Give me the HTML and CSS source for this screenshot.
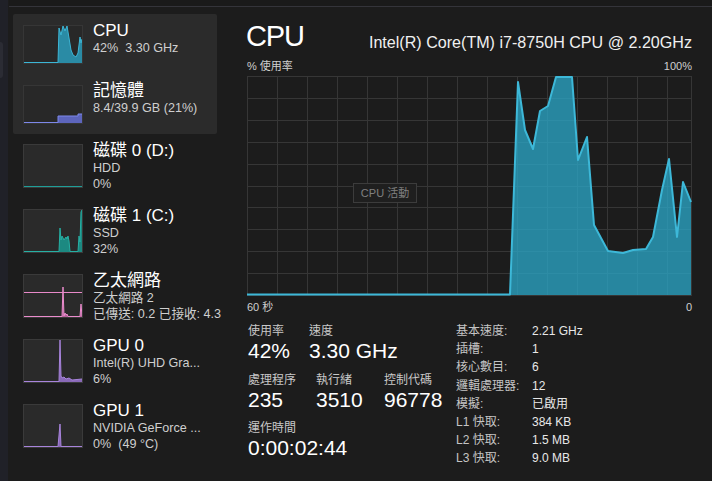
FILE: index.html
```html
<!DOCTYPE html>
<html lang="zh-Hant">
<head>
<meta charset="utf-8">
<title>工作管理員 - CPU</title>
<link rel="stylesheet" href="styles.css">
</head>
<body>
<div class="app">
  <div class="rail"><div class="rail-thumb"></div></div>
  <div class="shell">
    <div class="topbar"></div>
    <div class="cols">
      <nav class="sidebar">
        <div class="selected">
          <div class="item sel">
            <div class="thumb">
              <svg viewBox="0 0 58 37" width="58" height="37">
                <polygon points="0,37 34,37 35,2 37,9 39,0 41,5 43,0 45,12 47,24 49,29 52,31 54,27 56,11 57,17 58,13 58,37" fill="#2aa4c4" fill-opacity="0.8"/>
                <polyline points="0,36.5 34,36.5 35,2 37,9 39,0 41,5 43,0 45,12 47,24 49,29 52,31 54,27 56,11 57,17 58,13" fill="none" stroke="#3cb6d6" stroke-width="1"/>
              </svg>
            </div>
            <div class="meta">
              <div class="name">CPU</div>
              <div class="sub">42%&nbsp; 3.30 GHz</div>
            </div>
          </div>
          <div class="item sel">
            <div class="thumb">
              <svg viewBox="0 0 58 37" width="58" height="37">
                <polygon points="34,37 34,30 54,30 54,28 58,28 58,37" fill="#6670d6" fill-opacity="0.85"/>
                <polyline points="0,36.5 34,36.5 34,30 54,30 54,28 58,28" fill="none" stroke="#7d88ea" stroke-width="1"/>
              </svg>
            </div>
            <div class="meta">
              <div class="name">記憶體</div>
              <div class="sub">8.4/39.9 GB (21%)</div>
            </div>
          </div>
        </div>
        <div class="item">
          <div class="thumb">
            <svg viewBox="0 0 58 42" width="58" height="42">
              <line x1="0" y1="41.5" x2="58" y2="41.5" stroke="#1f9e98" stroke-width="1"/>
            </svg>
          </div>
          <div class="meta">
            <div class="name">磁碟 0 (D:)</div>
            <div class="sub">HDD</div>
            <div class="sub">0%</div>
          </div>
        </div>
        <div class="item">
          <div class="thumb">
            <svg viewBox="0 0 58 42" width="58" height="42">
              <polygon points="0,42 35,42 36,18 37,30 38,26 40,30 42,27 43,29 44,26 45,31 46,42 54,42 55,26 56,32 57,2 58,0 58,42" fill="#1a9a90" fill-opacity="0.85"/>
              <polyline points="0,41.5 35,41.5 36,18 37,30 38,26 40,30 42,27 43,29 44,26 45,31 46,41.5 54,41.5 55,26 56,32 57,2 58,0" fill="none" stroke="#26b0a4" stroke-width="1"/>
            </svg>
          </div>
          <div class="meta">
            <div class="name">磁碟 1 (C:)</div>
            <div class="sub">SSD</div>
            <div class="sub">32%</div>
          </div>
        </div>
        <div class="item">
          <div class="thumb">
            <svg viewBox="0 0 58 42" width="58" height="42">
              <line x1="0" y1="17.5" x2="58" y2="17.5" stroke="#e889c9" stroke-width="1"/>
              <polygon points="0,42 38,42 39,12 40,41 41,38 42,40 43,39 44,42 56,42 57,29 58,42" fill="#d76fb6" fill-opacity="0.8"/>
              <polyline points="0,41.5 38,41.5 39,12 40,41 41,38 42,40 43,39 44,41.5 56,41.5 57,29 58,41.5" fill="none" stroke="#ea8ccc" stroke-width="1"/>
            </svg>
          </div>
          <div class="meta">
            <div class="name">乙太網路</div>
            <div class="sub">乙太網路 2</div>
            <div class="sub">已傳送: 0.2 已接收: 4.3</div>
          </div>
        </div>
        <div class="item">
          <div class="thumb">
            <svg viewBox="0 0 58 42" width="58" height="42">
              <polygon points="0,42 35,42 36,0 37,36 38,38 40,37 42,39 45,38 48,40 58,39 58,42" fill="#9a74d0" fill-opacity="0.85"/>
              <polyline points="0,41.5 35,41.5 36,0 37,36 38,38 40,37 42,39 45,38 48,40 58,39" fill="none" stroke="#a884dc" stroke-width="1"/>
            </svg>
          </div>
          <div class="meta">
            <div class="name">GPU 0</div>
            <div class="sub">Intel(R) UHD Gra...</div>
            <div class="sub">6%</div>
          </div>
        </div>
        <div class="item">
          <div class="thumb">
            <svg viewBox="0 0 58 42" width="58" height="42">
              <polygon points="0,42 34,42 36,19 37,42" fill="#9a74d0" fill-opacity="0.85"/>
              <polyline points="0,41.5 34,41.5 36,19 37,41.5 58,41.5" fill="none" stroke="#a884dc" stroke-width="1"/>
            </svg>
          </div>
          <div class="meta">
            <div class="name">GPU 1</div>
            <div class="sub">NVIDIA GeForce ...</div>
            <div class="sub">0%&nbsp; (49 °C)</div>
          </div>
        </div>
      </nav>

      <main class="detail">
        <header class="head">
          <h1 class="title">CPU</h1>
          <div class="model">Intel(R) Core(TM) i7-8750H CPU @ 2.20GHz</div>
        </header>
        <div class="axis top-axis"><span>% 使用率</span><span>100%</span></div>
        <div class="graph">
          <svg viewBox="0 0 445 220" width="445" height="220">
            <g stroke="#363636" stroke-width="1">
              <line x1="0.5" y1="0" x2="0.5" y2="220"/>
              <line x1="30.5" y1="0" x2="30.5" y2="220"/>
              <line x1="60.5" y1="0" x2="60.5" y2="220"/>
              <line x1="90.5" y1="0" x2="90.5" y2="220"/>
              <line x1="120.5" y1="0" x2="120.5" y2="220"/>
              <line x1="150.5" y1="0" x2="150.5" y2="220"/>
              <line x1="180.5" y1="0" x2="180.5" y2="220"/>
              <line x1="210.5" y1="0" x2="210.5" y2="220"/>
              <line x1="240.5" y1="0" x2="240.5" y2="220"/>
              <line x1="270.5" y1="0" x2="270.5" y2="220"/>
              <line x1="300.5" y1="0" x2="300.5" y2="220"/>
              <line x1="330.5" y1="0" x2="330.5" y2="220"/>
              <line x1="360.5" y1="0" x2="360.5" y2="220"/>
              <line x1="390.5" y1="0" x2="390.5" y2="220"/>
              <line x1="420.5" y1="0" x2="420.5" y2="220"/>
              <line x1="444.5" y1="0" x2="444.5" y2="220"/>
              <line x1="0" y1="0.5" x2="445" y2="0.5"/>
              <line x1="0" y1="22.5" x2="445" y2="22.5"/>
              <line x1="0" y1="44.5" x2="445" y2="44.5"/>
              <line x1="0" y1="66.5" x2="445" y2="66.5"/>
              <line x1="0" y1="88.5" x2="445" y2="88.5"/>
              <line x1="0" y1="110.5" x2="445" y2="110.5"/>
              <line x1="0" y1="131.5" x2="445" y2="131.5"/>
              <line x1="0" y1="153.5" x2="445" y2="153.5"/>
              <line x1="0" y1="175.5" x2="445" y2="175.5"/>
              <line x1="0" y1="197.5" x2="445" y2="197.5"/>
              <line x1="0" y1="219.5" x2="445" y2="219.5"/>
            </g>
            <polygon points="0,219 263,219 271,6 278,54 286,73 293,35 301,30 309,1 325,1 331,84 340,61 347,149 361,175 376,177 386,174 399,173 406,161 415,114 422,83 430,161 436,106 444,126 444,219" fill="#2aa4c4" fill-opacity="0.78"/>
            <polyline points="0,218.5 263,218.5 271,6 278,54 286,73 293,35 301,30 309,1 325,1 331,84 340,61 347,149 361,175 376,177 386,174 399,173 406,161 415,114 422,83 430,161 436,106 444,126" fill="none" stroke="#3db8d8" stroke-width="2" stroke-linejoin="round"/>
          </svg>
          <div class="tip">CPU 活動</div>
        </div>
        <div class="axis bottom-axis"><span>60 秒</span><span>0</span></div>

        <section class="stats">
          <div class="stats-left">
            <div class="srow">
              <div class="stat w62"><div class="lbl">使用率</div><div class="val">42%</div></div>
              <div class="stat"><div class="lbl">速度</div><div class="val">3.30 GHz</div></div>
            </div>
            <div class="srow">
              <div class="stat w68"><div class="lbl">處理程序</div><div class="val">235</div></div>
              <div class="stat w68"><div class="lbl">執行緒</div><div class="val">3510</div></div>
              <div class="stat"><div class="lbl">控制代碼</div><div class="val">96778</div></div>
            </div>
            <div class="srow">
              <div class="stat"><div class="lbl">運作時間</div><div class="val">0:00:02:44</div></div>
            </div>
          </div>
          <dl class="stats-right">
            <div class="kv"><dt>基本速度:</dt><dd>2.21 GHz</dd></div>
            <div class="kv"><dt>插槽:</dt><dd>1</dd></div>
            <div class="kv"><dt>核心數目:</dt><dd>6</dd></div>
            <div class="kv"><dt>邏輯處理器:</dt><dd>12</dd></div>
            <div class="kv"><dt>模擬:</dt><dd>已啟用</dd></div>
            <div class="kv"><dt>L1 快取:</dt><dd>384 KB</dd></div>
            <div class="kv"><dt>L2 快取:</dt><dd>1.5 MB</dd></div>
            <div class="kv"><dt>L3 快取:</dt><dd>9.0 MB</dd></div>
          </dl>
        </section>
      </main>
    </div>
  </div>
</div>
</body>
</html>
```

FILE: styles.css
```css
* { box-sizing: border-box; }
html, body {
  margin: 0;
  padding: 0;
  background: #1c1c1c;
  width: 712px;
  height: 481px;
  overflow: hidden;
  font-family: "Liberation Sans", "Noto Sans CJK TC", sans-serif;
  color: #ffffff;
}
.app {
  display: flex;
  width: 712px;
  height: 481px;
}
.rail {
  width: 9px;
  flex: none;
  background: #202128;
  border-right: 1px solid #1c1c1c;
  padding-top: 42px;
}
.rail-thumb {
  width: 3px;
  height: 36px;
  background: #2b2c34;
  border-radius: 0 3px 3px 0;
}
.shell {
  flex: 1;
  display: flex;
  flex-direction: column;
  min-width: 0;
}
.topbar {
  height: 7px;
  flex: none;
  background: #1a1a1a;
  border-bottom: 1px solid #34343a;
}
.cols {
  display: flex;
  flex: 1;
  min-height: 0;
}

/* Sidebar */
.sidebar {
  width: 221px;
  flex: none;
  padding-left: 4px;
  padding-top: 7px;
}
.selected {
  width: 204px;
  background: #2b2b2b;
  border-radius: 2px;
  padding-left: 10px;
}
.item {
  display: flex;
  align-items: flex-start;
  gap: 10px;
  height: 65px;
  padding-left: 10px;
  white-space: nowrap;
}
.item.sel {
  height: 60px;
  padding-left: 0;
}
.thumb {
  width: 60px;
  height: 44px;
  flex: none;
  margin-top: 10px;
  background: #2a2a2a;
  border: 1px solid #3a3a3a;
}
.item.sel .thumb {
  height: 39px;
  margin-top: 11px;
  background: #282828;
  border-color: #363636;
}
.thumb svg { display: block; }
.meta {
  padding-top: 7px;
  min-width: 0;
}
.name {
  font-size: 17px;
  line-height: 20px;
  color: #ffffff;
}
.sub {
  font-size: 12.6px;
  line-height: 15.5px;
  color: #cfcfcf;
}

/* Detail */
.detail {
  flex: 1;
  padding-left: 16px;
  padding-right: 20px;
  min-width: 0;
}
.head {
  display: flex;
  justify-content: space-between;
  align-items: baseline;
  margin-top: 11px;
  height: 36px;
}
.title {
  margin: 0;
  font-size: 29px;
  letter-spacing: -1.2px;
  line-height: 36px;
  font-weight: 400;
  color: #ffffff;
}
.model {
  font-size: 16.1px;
  line-height: 20px;
  color: #f0f0f0;
  position: relative;
  top: 2px;
}
.axis {
  display: flex;
  justify-content: space-between;
  font-size: 11px;
  line-height: 14px;
  color: #cfcfcf;
  width: 445px;
  margin-left: 1px;
}
.top-axis {
  margin-top: 5px;
  margin-bottom: 3px;
}
.bottom-axis {
  padding-top: 4px;
}
.graph {
  position: relative;
  width: 445px;
  height: 220px;
  margin-left: 1px;
}
.graph svg { display: block; }
.tip {
  position: absolute;
  left: 106px;
  top: 107px;
  width: 64px;
  height: 20px;
  border: 1px solid #3c3c3c;
  background: #1f1f1f;
  color: #808080;
  font-size: 11px;
  line-height: 18px;
  text-align: center;
}

/* Stats */
.stats {
  display: flex;
  margin-top: 8px;
}
.stats-left {
  width: 210px;
  flex: none;
  padding-left: 2px;
}
.srow {
  display: flex;
  margin-bottom: 8.5px;
}
.stat.w62 { width: 61px; }
.stat.w68 { width: 68px; }
.lbl {
  font-size: 12px;
  line-height: 16px;
  padding-top: 1px;
  color: #c8c8c8;
}
.val {
  font-size: 21px;
  line-height: 23px;
  color: #ffffff;
}
.stats-right {
  margin: 0;
  font-size: 12px;
  line-height: 18.2px;
}
.kv {
  display: flex;
}
.kv dt {
  width: 76px;
  color: #c4c4c4;
}
.kv dd {
  margin: 0;
  color: #e8e8e8;
}
```
